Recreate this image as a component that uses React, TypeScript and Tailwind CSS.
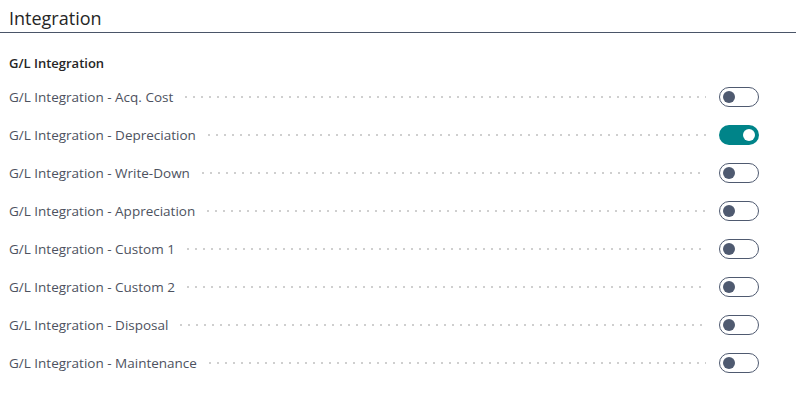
const rows = [
  { label: 'G/L Integration - Acq. Cost', on: false },
  { label: 'G/L Integration - Depreciation', on: true },
  { label: 'G/L Integration - Write-Down', on: false },
  { label: 'G/L Integration - Appreciation', on: false },
  { label: 'G/L Integration - Custom 1', on: false },
  { label: 'G/L Integration - Custom 2', on: false },
  { label: 'G/L Integration - Disposal', on: false },
  { label: 'G/L Integration - Maintenance', on: false },
];

function Toggle({ on }: { on: boolean }) {
  return on ? (
    <div className="w-10 h-5 rounded-full bg-[#008489] flex items-center justify-end pr-[4px]">
      <div className="w-3 h-3 rounded-full bg-white" />
    </div>
  ) : (
    <div className="w-10 h-5 rounded-full border border-[#4f5a70] bg-white flex items-center pl-[3px]">
      <div className="w-3 h-3 rounded-full bg-[#4f5a70]" />
    </div>
  );
}

export default function App() {
  return (
    <div className="w-[796px] h-[393px] bg-white font-['Open_Sans',sans-serif] text-[#212121] overflow-hidden">
      {/* Header */}
      <div className="pt-[5px] border-b border-[#4a5568]">
        <h1 className="px-[9px] text-[18px] leading-[26px] pb-[1px] text-[#262626]">Integration</h1>
      </div>

      {/* Group */}
      <div className="pl-[9px] pr-[37px] pt-[20px]">
        <h2 className="text-[13px] font-semibold leading-5 text-[#262626]">G/L Integration</h2>
        <div className="mt-[5px] flex flex-col">
          {rows.map((r) => (
            <div key={r.label} className="h-[38px] flex items-center">
              <span className="text-[13.5px] text-[#4d5260] whitespace-nowrap">{r.label}</span>
              <div className="flex-1 ml-[9px] mr-[5px] h-[4px] bg-[radial-gradient(circle,#cfcfcf_1px,transparent_1.2px)] bg-[length:8px_4px]" />
              <div className="w-[48px] flex justify-end shrink-0">
                <Toggle on={r.on} />
              </div>
            </div>
          ))}
        </div>
      </div>
    </div>
  );
}
